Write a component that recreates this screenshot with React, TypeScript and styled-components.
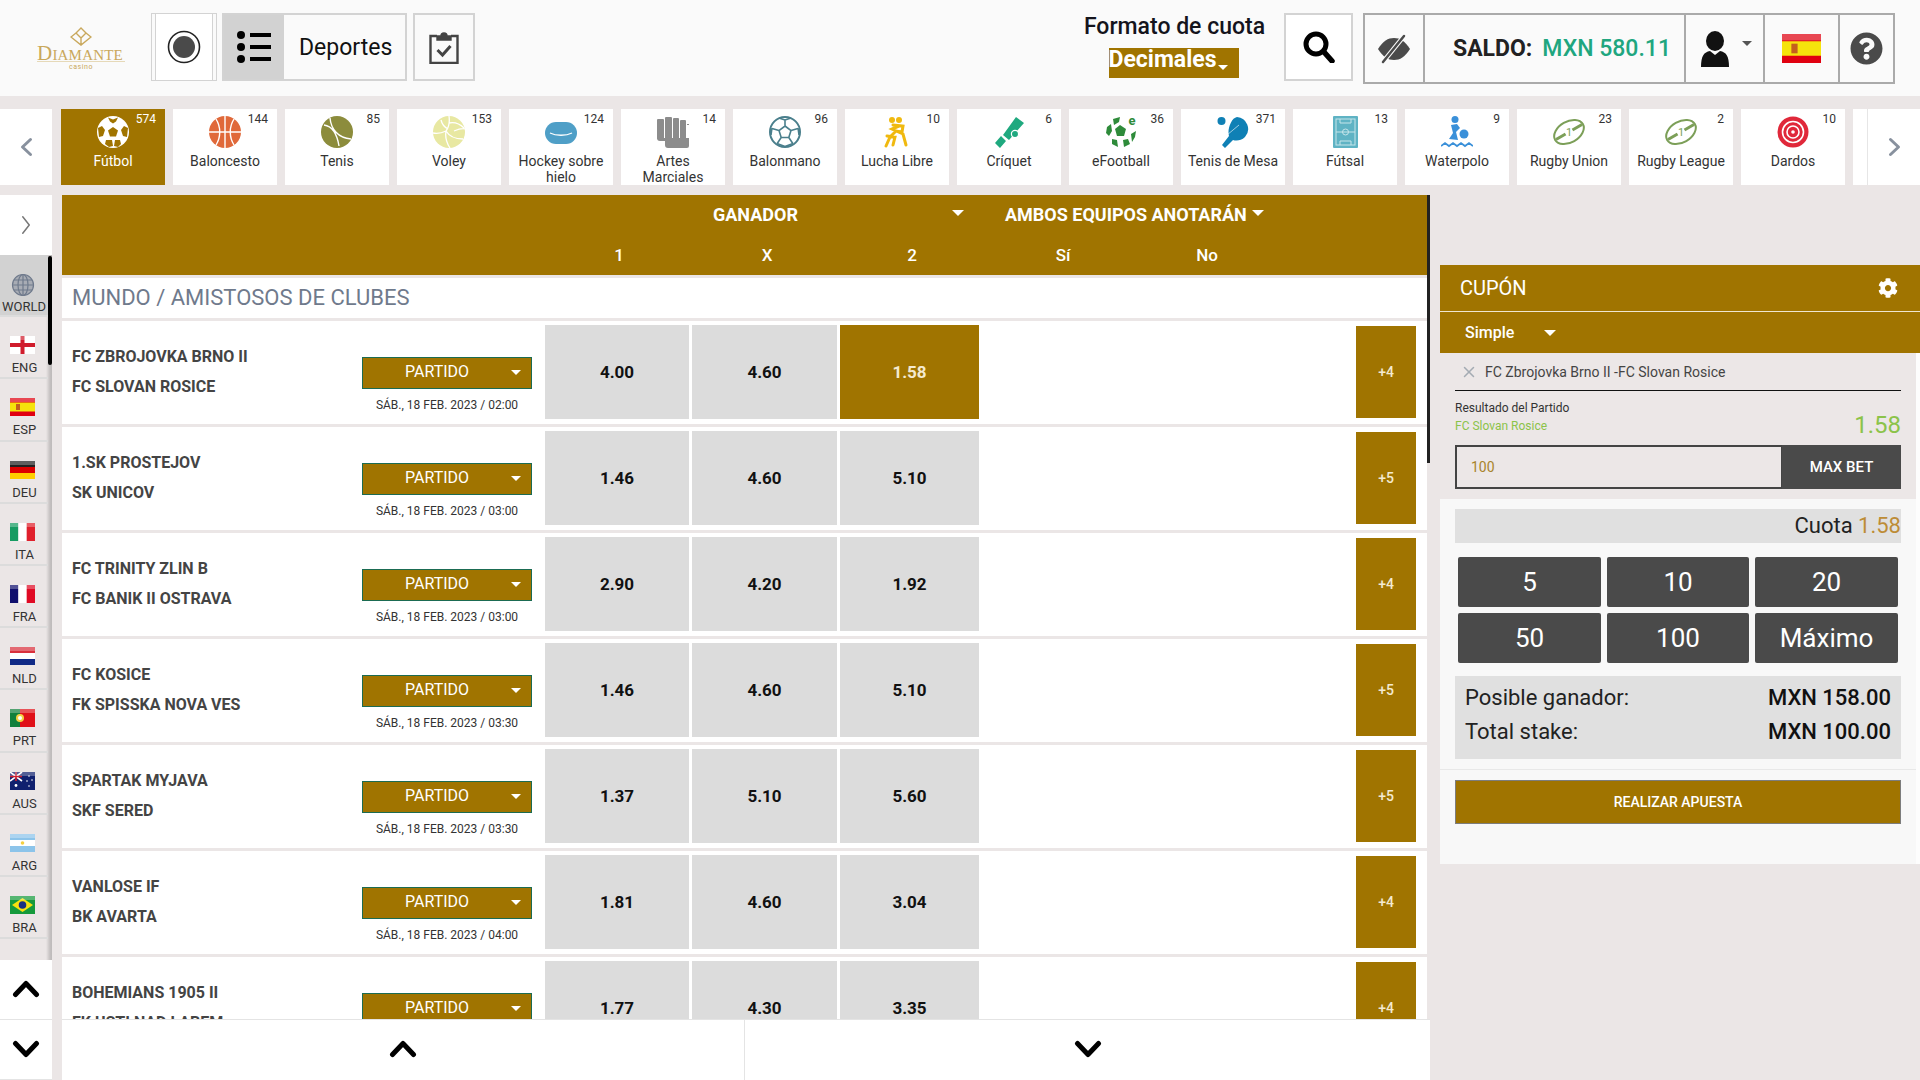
import React from "react";
import styled, { createGlobalStyle } from "styled-components";
import { FaCog, FaQuestionCircle } from "react-icons/fa";
import { X } from "lucide-react";

const GOLD = "#a07400";
const PAGE = "#ebe6e6";

const GlobalStyle = createGlobalStyle`
  html, body { margin: 0; padding: 0; background: ${PAGE}; }
  * { box-sizing: border-box; }
  body { font-family: Roboto, "Liberation Sans", sans-serif; color: #222; }
`;

const Page = styled.div`
  width: 1920px;
  height: 1080px;
  overflow: hidden;
  display: flex;
  flex-direction: column;
  background: ${PAGE};
`;

/* ---------- top bar ---------- */
const TopBar = styled.header`
  height: 96px;
  flex: none;
  background: #fafafa;
  display: flex;
  padding-top: 13px;
`;
const Logo = styled.div`
  width: 151px;
  padding: 14px 0 0 37px;
  display: flex;
  flex-direction: column;
  color: #c9a85c;
  font-family: "Liberation Serif", serif;
  line-height: 1;
`;
const LogoMark = styled.svg`
  margin-left: 33px;
  flex: none;
`;
const LogoWord = styled.span`
  font-size: 15px;
  line-height: 15px;
  letter-spacing: 0.2px;
  white-space: nowrap;
  border-bottom: 1px solid #e6d9b8;
  width: 88px;
  height: 16px;
  &::first-letter { font-size: 21px; }
`;
const LogoSub = styled.span`
  font-size: 7px;
  line-height: 8px;
  letter-spacing: 0.6px;
  text-align: center;
  width: 88px;
  margin-top: 1px;
  font-family: Roboto, sans-serif;
`;
const BarBox = styled.div<{ $w: number; $ml?: number }>`
  width: ${(p) => p.$w}px;
  height: 68px;
  margin-left: ${(p) => p.$ml ?? 0}px;
  border: 2px solid #d3d3d3;
  display: flex;
  align-items: center;
  justify-content: center;
  flex: none;
`;
const RecordBox = styled(BarBox)`
  background: #fff;
  border-width: 1px;
  box-shadow: inset 3px 0 0 #fafafa, inset 4px 0 0 #d3d3d3, inset -3px 0 0 #fafafa, inset -4px 0 0 #d3d3d3;
`;
const SportsBox = styled(BarBox)`
  justify-content: flex-start;
  font-size: 23px;
  color: #111;
`;
const ListIconCell = styled.div`
  width: 60px;
  height: 100%;
  background: #d2d2d2;
  display: flex;
  align-items: center;
  justify-content: center;
  margin-right: 15px;
`;
const OddsFormat = styled.div`
  width: 221px;
  margin-left: 588px;
  display: flex;
  flex-direction: column;
  align-items: center;
  flex: none;
  padding: 1px 0 0 2px;
`;
const FormatTitle = styled.div`
  font-size: 23px;
  font-weight: 500;
  color: #14141c;
  line-height: 26px;
`;
const FormatSelect = styled.div`
  margin-top: 8px;
  margin-left: -2px;
  width: 130px;
  height: 30px;
  background: ${GOLD};
  color: #fff;
  font-size: 23px;
  font-weight: 700;
  line-height: 24px;
  display: flex;
  align-items: flex-start;
  justify-content: flex-start;
`;
const SearchBox = styled(BarBox)`
  background: #fff;
`;
const AccountBar = styled.div`
  margin-left: 10px;
  width: 532px;
  height: 71px;
  border: 2px solid #aaa;
  display: flex;
  flex: none;
`;
const AccountCell = styled.div<{ $w: number; $divider?: boolean }>`
  width: ${(p) => p.$w}px;
  flex: none;
  display: flex;
  align-items: center;
  justify-content: center;
  position: relative;
  border-right: ${(p) => (p.$divider ? "2px solid #aaa" : "none")};
`;
const BalanceCell = styled(AccountCell)`
  justify-content: flex-start;
  padding-left: 28px;
  font-size: 23px;
  font-weight: 700;
  color: #222;
  white-space: nowrap;
`;
const BalanceValue = styled.span`
  color: #20a67f;
  margin-left: 10px;
  font-weight: 500;
`;
const Caret = styled.i<{ $size?: number; $color?: string }>`
  display: inline-block;
  flex: none;
  width: 0;
  height: 0;
  border-left: ${(p) => p.$size ?? 6}px solid transparent;
  border-right: ${(p) => p.$size ?? 6}px solid transparent;
  border-top: ${(p) => p.$size ?? 6}px solid ${(p) => p.$color ?? "#fff"};
`;
const FormatCaret = styled(Caret)`
  margin-top: 17px;
  margin-left: 1px;
`;
const UserCaret = styled(Caret)`
  position: absolute;
  top: 26px;
  right: 11px;
`;

/* ---------- sports strip ---------- */
const SportsStrip = styled.nav`
  height: 76px;
  margin-top: 13px;
  flex: none;
  display: flex;
  gap: 8px;
  overflow: hidden;
`;
const StripArrow = styled.div<{ $w: number; $mr?: number }>`
  width: ${(p) => p.$w}px;
  margin-right: ${(p) => p.$mr ?? 0}px;
  flex: none;
  background: #fff;
  display: flex;
  align-items: center;
  justify-content: center;
`;
const SportTile = styled.div<{ $active?: boolean }>`
  width: 104px;
  flex: none;
  position: relative;
  background: ${(p) => (p.$active ? GOLD : "#fff")};
  color: ${(p) => (p.$active ? "#fff" : "#333")};
  display: flex;
  flex-direction: column;
  align-items: center;
  padding-top: 7px;
`;
const SportCount = styled.span`
  position: absolute;
  top: 2px;
  right: 9px;
  font-size: 12px;
  line-height: 16px;
`;
const SportLabel = styled.span`
  font-size: 14px;
  line-height: 16px;
  margin-top: 5px;
  text-align: center;
  width: 100%;
  padding: 0 5px;
`;
const StripEnd = styled.div`
  display: flex;
  flex: none;
  width: 67px;
`;
const StripStub = styled.div`
  width: 15px;
  background: #fff;
  border-right: 1px solid #e6e6e6;
`;

/* ---------- body ---------- */
const Body = styled.div`
  flex: 1;
  min-height: 0;
  display: flex;
  margin-top: 10px;
`;
const Sidebar = styled.aside`
  width: 52px;
  flex: none;
  display: flex;
  flex-direction: column;
`;
const SideExpand = styled.div`
  height: 60px;
  flex: none;
  background: #fff;
  display: flex;
  align-items: center;
  justify-content: center;
`;
const CountryList = styled.div`
  flex: 1;
  min-height: 0;
  overflow: hidden;
  position: relative;
  padding-right: 4px;
  background: linear-gradient(to right, ${PAGE} 46px, #c4c0c0 50px, #bdbaba 52px);
`;
const SideThumb = styled.div`
  position: absolute;
  top: 1px;
  right: 0;
  width: 4px;
  height: 109px;
  background: #000;
  border-radius: 2px;
`;
const CountryItem = styled.div<{ $active?: boolean }>`
  height: 62.2px;
  display: flex;
  flex-direction: column;
  align-items: center;
  padding-top: ${(p) => (p.$active ? 18 : 19)}px;
  border-bottom: 2px solid #dcdcdc;
  background: ${(p) => (p.$active ? "linear-gradient(#d2d2d2 0 60px, #ebe6e6 60px)" : "transparent")};
  font-size: 13px;
  color: #333;
  line-height: 16px;
  overflow: hidden;
  svg { margin-left: -3px; }
`;
const CountryName = styled.span<{ $active?: boolean }>`
  margin-top: ${(p) => (p.$active ? 2 : 6)}px;
  padding-left: ${(p) => (p.$active ? 0 : 1)}px;
`;
const SideNav = styled.div`
  height: 60px;
  flex: none;
  background: #fff;
  display: flex;
  align-items: center;
  justify-content: center;
  border-bottom: 1px solid #e4e4e4;
  padding-bottom: 2px;
`;

const Main = styled.main`
  width: 1368px;
  margin-left: 10px;
  flex: none;
  display: flex;
  flex-direction: column;
  position: relative;
  background: ${PAGE};
  padding-right: 3px;
`;
const MainThumb = styled.div`
  position: absolute;
  top: 0;
  right: 0;
  width: 3px;
  height: 268px;
  background: #222;
`;
const TableHead = styled.div`
  height: 80px;
  flex: none;
  background: ${GOLD};
  color: #fff;
  display: flex;
  flex-direction: column;
`;
const HeadGroups = styled.div`
  display: flex;
  align-items: center;
  padding: 8px 0 0 651px;
  height: 30px;
  font-size: 18px;
  font-weight: 700;
  white-space: nowrap;
`;
const GanadorCaret = styled(Caret)`
  margin: -3px 0 0 154px;
`;
const AmbosLabel = styled.span`
  margin-left: 41px;
  width: 247px;
`;
const AmbosCaret = styled(Caret)`
  margin: -3px 0 0 0;
`;
const HeadColumns = styled.div`
  display: grid;
  grid-template-columns: 148px 148px 142px 160px 128px;
  padding: 15px 0 0 483px;
  font-size: 17px;
  font-weight: 500;
  line-height: 30px;
  text-align: center;
`;
const LeagueTitle = styled.h2`
  margin: 3px 0;
  height: 40px;
  flex: none;
  background: #fff;
  padding-left: 10px;
  font-size: 22px;
  line-height: 40px;
  font-weight: 400;
  color: #6f7a8c;
`;
const MatchList = styled.div`
  flex: 1;
  min-height: 0;
  overflow: hidden;
  display: flex;
  flex-direction: column;
  gap: 3px;
`;
const MatchRow = styled.div`
  height: 103px;
  flex: none;
  background: #fff;
  display: flex;
`;
const Teams = styled.div`
  width: 300px;
  flex: none;
  padding: 21px 0 0 10px;
  font-size: 16px;
  font-weight: 700;
  color: #444;
  line-height: 30px;
`;
const Market = styled.div`
  width: 170px;
  flex: none;
  padding-top: 36px;
  display: flex;
  flex-direction: column;
  align-items: center;
`;
const MarketSelect = styled.div`
  width: 170px;
  height: 32px;
  background: ${GOLD};
  border: 1px solid #1b6b52;
  color: #fff;
  font-size: 16px;
  line-height: 28px;
  display: flex;
  align-items: flex-start;
  padding: 0 10px 0 42px;
  justify-content: space-between;
`;
const MarketCaret = styled(Caret)`
  margin-top: 12px;
`;
const MatchDate = styled.div`
  margin-top: 8px;
  font-size: 12px;
  line-height: 16px;
  color: #333;
  white-space: nowrap;
`;
const OddsGrid = styled.div`
  margin: 4px 0 0 13px;
  display: grid;
  grid-template-columns: 144px 145px 139px;
  column-gap: 3px;
  height: 94px;
  flex: none;
`;
const OddCell = styled.div<{ $selected?: boolean }>`
  background: ${(p) => (p.$selected ? GOLD : "#dcdcdc")};
  color: ${(p) => (p.$selected ? "#f4ead0" : "#111")};
  font-size: 17px;
  font-weight: 700;
  display: flex;
  align-items: center;
  justify-content: center;
`;
const MoreBets = styled.div`
  margin: 5px 0 0 377px;
  width: 60px;
  height: 92px;
  flex: none;
  background: ${GOLD};
  color: #f4ead0;
  font-size: 14px;
  font-weight: 500;
  display: flex;
  align-items: center;
  justify-content: center;
`;
const PageNav = styled.div`
  height: 61px;
  flex: none;
  margin-right: -3px;
  background: #fff;
  border-top: 1px solid #e4e4e4;
  display: grid;
  grid-template-columns: 683px 1fr;
`;
const PageNavCell = styled.div<{ $divider?: boolean }>`
  display: flex;
  align-items: center;
  justify-content: center;
  padding-bottom: 2px;
  border-right: ${(p) => (p.$divider ? "1px solid #e4e4e4" : "none")};
`;

/* ---------- bet slip ---------- */
const Slip = styled.aside`
  width: 480px;
  margin: 70px 0 0 10px;
  flex: none;
  height: 599px;
  display: flex;
  flex-direction: column;
`;
const SlipHead = styled.div`
  height: 47px;
  background: ${GOLD};
  color: #fff;
  font-size: 20px;
  display: flex;
  align-items: center;
  justify-content: space-between;
  padding: 0 22px 0 20px;
  border-bottom: 1px solid #efe6d0;
`;
const SlipType = styled.div`
  height: 41px;
  background: ${GOLD};
  color: #fff;
  font-size: 16px;
  font-weight: 500;
  display: flex;
  align-items: center;
  padding-left: 25px;
  gap: 30px;
`;
const SlipBody = styled.div`
  flex: 1;
  background: #f8f8f8;
  border-right: 4px solid #fdfdfd;
  display: flex;
  flex-direction: column;
`;
const Selection = styled.div`
  height: 146px;
  flex: none;
  background: #ece7e7;
  padding: 0 15px;
`;
const SelectionTitle = styled.div`
  height: 38px;
  border-bottom: 1px solid #111;
  display: flex;
  align-items: center;
  padding-left: 5px;
  gap: 7px;
  font-size: 14px;
  color: #444;
`;
const PickRow = styled.div`
  display: flex;
  justify-content: space-between;
  align-items: flex-end;
  height: 52px;
`;
const PickMarket = styled.div`
  font-size: 12px;
  line-height: 18px;
  color: #333;
  padding-bottom: 8px;
`;
const PickTeam = styled.div`
  color: #8bc34a;
`;
const PickOdd = styled.div`
  font-size: 24px;
  line-height: 28px;
  color: #8bc34a;
  padding-bottom: 4px;
  height: 32px;
`;
const StakeRow = styled.div`
  display: flex;
  height: 44px;
  margin-top: 2px;
`;
const StakeInput = styled.div`
  flex: 1;
  border: 2px solid #444;
  border-right-width: 1px;
  color: #a8842b;
  font-size: 14px;
  display: flex;
  align-items: center;
  padding-left: 14px;
`;
const MaxBet = styled.div`
  width: 119px;
  background: #4a4a4a;
  color: #fff;
  font-size: 15px;
  font-weight: 500;
  display: flex;
  align-items: center;
  justify-content: center;
`;
const Totals = styled.div`
  padding: 10px 15px 0;
  flex: none;
`;
const QuotaBar = styled.div`
  height: 34px;
  background: #e0e0e0;
  text-align: right;
  font-size: 22px;
  line-height: 34px;
  color: #222;
`;
const QuotaValue = styled.span`
  color: #bd8c36;
`;
const QuickGrid = styled.div`
  display: grid;
  grid-template-columns: 143px 142px 143px;
  gap: 6px;
  margin: 14px 3px 0;
`;
const QuickButton = styled.div`
  height: 50px;
  background: #4a4a4a;
  color: #fff;
  border-radius: 2px;
  font-size: 26px;
  display: flex;
  align-items: center;
  justify-content: center;
`;
const Summary = styled.div`
  margin-top: 13px;
  height: 83px;
  background: #e0e0e0;
  padding: 5px 10px 0;
  font-size: 22px;
  line-height: 34px;
`;
const SummaryRow = styled.div`
  display: flex;
  justify-content: space-between;
`;
const SummaryValue = styled.b`
  font-weight: 500;
  color: #111;
`;
const SlipDivider = styled.div`
  height: 1px;
  background: #e8e8e8;
  margin-top: 10px;
  flex: none;
`;
const PlaceBet = styled.div`
  margin: 10px 15px 0;
  height: 44px;
  flex: none;
  background: ${GOLD};
  border: 1px solid #7d7d7d;
  color: #fff;
  font-size: 14px;
  font-weight: 500;
  display: flex;
  align-items: center;
  justify-content: center;
`;

/* ---------- drawings ---------- */
const Chevron = ({ dir, color = "#000", w = 28, h = 18, sw = 5 }: { dir: "up" | "down" | "left" | "right"; color?: string; w?: number; h?: number; sw?: number }) => {
  const p = sw / 2 + 1;
  const pts: Record<string, string> = {
    up: `${p},${h - p} ${w / 2},${p} ${w - p},${h - p}`,
    down: `${p},${p} ${w / 2},${h - p} ${w - p},${p}`,
    left: `${w - p},${p} ${p},${h / 2} ${w - p},${h - p}`,
    right: `${p},${p} ${w - p},${h / 2} ${p},${h - p}`,
  };
  return (
    <svg width={w} height={h} viewBox={`0 0 ${w} ${h}`}>
      <polyline points={pts[dir]} fill="none" stroke={color} strokeWidth={sw} strokeLinecap="round" strokeLinejoin="round" />
    </svg>
  );
};

const Ball = ({ fill, children }: { fill: string; children?: React.ReactNode }) => (
  <svg width="32" height="32" viewBox="0 0 32 32">
    <circle cx="16" cy="16" r="16" fill={fill} />
    {children}
  </svg>
);

const rugby = (
  <svg width="32" height="32" viewBox="0 0 32 32">
    <g transform="rotate(-30 16 16)" fill="none" stroke="#7c9f58" strokeWidth="2">
      <ellipse cx="16" cy="16" rx="16" ry="10.5" />
      <path d="M1 16h11M20 16h11" strokeWidth="3" />
    </g>
    <text x="16" y="20" fontSize="11" fontFamily="Roboto" fill="#7c9f58" textAnchor="middle">1</text>
  </svg>
);

const sportIcons: Record<string, React.ReactNode> = {
  football: (
    <Ball fill="#fff">
      <g fill={GOLD}>
        <path d="M16 11l5 3.5-2 6h-6l-2-6z" />
        <path d="M11 1.5l5 2 5-2-2 4-3 2-3-2z" />
        <path d="M1 12l4-2 3 4-2 6-4 1zM31 12l-4-2-3 4 2 6 4 1z" />
        <path d="M9 24h6l1 6-4 1-4-3zM23 24h-5l-1 6 4 1 3-3z" />
      </g>
    </Ball>
  ),
  basket: (
    <Ball fill="#e0693a">
      <path d="M16 0v32M0 16h32M7 3c5 8 5 18 0 26M25 3c-5 8-5 18 0 26" stroke="#fff" strokeWidth="1.4" fill="none" />
    </Ball>
  ),
  tennis: (
    <Ball fill="#8c8c3c">
      <path d="M9 2c1 11 8 20 21 21M3 9c8 1 13 9 15 21" stroke="#fff" strokeWidth="1.4" fill="none" />
    </Ball>
  ),
  volley: (
    <Ball fill="#e8e8a2">
      <path d="M16 0c1 7 0 11-3 15-4 2-8 3-13 2M13 15c3 5 8 8 17 8M16 7c5-1 11 1 15 5M13 15c-1 6 0 11 4 17M8 4c1 4 3 7 7 9M21 15c5-2 8-3 11-2" stroke="#fff" strokeWidth="1.3" fill="none" />
    </Ball>
  ),
  hockey: (
    <svg width="32" height="32" viewBox="0 0 32 32">
      <rect y="6" width="32" height="22" rx="11" fill="#4f9fc7" />
      <path d="M5 17c6 3 16 3 22 0" stroke="#fff" strokeWidth="1.3" fill="none" />
    </svg>
  ),
  martial: (
    <svg width="32" height="32" viewBox="0 0 32 32" fill="#8c8c8c">
      <rect x="0" y="3" width="7" height="20" rx="1" />
      <rect x="8" y="1" width="7" height="22" rx="1" />
      <rect x="16" y="2" width="6" height="21" rx="1" />
      <rect x="23" y="4" width="6" height="19" rx="1" />
      <path d="M0 22h32V9h-2v-1h2v22a2 2 0 0 1-2 2H11a3 3 0 0 1-3-3v-4H3a3 3 0 0 1-3-3z" />
    </svg>
  ),
  handball: (
    <svg width="32" height="32" viewBox="0 0 32 32" fill="none" stroke="#4a7f8c" strokeWidth="1.6">
      <circle cx="16" cy="16" r="15" strokeWidth="2" />
      <path d="M16 10l6 4.5-2.2 7h-7.6l-2.2-7zM16 10V4M22 14.5l7-2M19.8 21.5l4 6M12.2 21.5l-4 6M10 14.5l-7-2M16 4l-6-2M16 4l6-2M29 12l1 7M3 12l-1 7M8 27.5l8 3M24 27.5l-8 3" />
    </svg>
  ),
  wrestling: (
    <svg width="32" height="32" viewBox="0 0 32 32" fill="none" stroke="#f0b90f" strokeWidth="3" strokeLinecap="round">
      <circle cx="11" cy="4" r="3" fill="#f0b90f" stroke="none" />
      <circle cx="18" cy="4" r="3" fill="#f0b90f" stroke="none" />
      <path d="M12 9l10 1-1 6-6-1-6 6-4 9M18 10l-7 3 11 5 3 11M6 20l8 1-2 8" />
    </svg>
  ),
  cricket: (
    <svg width="32" height="32" viewBox="0 0 32 32" fill="#1fa97f">
      <path d="M23 1l8 6-15 17-6-5zM8 20l5 5-6 7-5-5z" />
      <circle cx="22" cy="18" r="3.6" stroke="#fff" strokeWidth="1.2" />
    </svg>
  ),
  efootball: (
    <svg width="32" height="32" viewBox="0 0 32 32" fill="#2e8b3a">
      <path d="M15 9l6 4-2 7h-7l-2-7z" />
      <path d="M8 3l7-2-1 5-5 3zM2 11l4-3 1 7-3 5-3-3zM7 23l5 1 1 7-6-3zM18 24l5-1 2 5-6 3zM26 18l5-3-1 6-3 5z" />
      <text x="27" y="9" fontSize="13" fontWeight="700" fontFamily="Roboto" textAnchor="middle">e</text>
    </svg>
  ),
  tabletennis: (
    <svg width="32" height="32" viewBox="0 0 32 32" fill="#0f80b5">
      <circle cx="4.500" cy="5" r="4" />
      <path d="M20 1a12 12 0 0 1 8 20c-4 4-9 4-12 3l-8 8-3-3 7-9c-2-6 2-18 8-19z" />
      <path d="M10 19l12-10" stroke="#fff" strokeWidth="0.6" />
    </svg>
  ),
  futsal: (
    <svg width="32" height="32" viewBox="0 0 32 32">
      <rect x="4" y="0" width="25" height="32" rx="1" fill="#5fb3c4" />
      <g fill="none" stroke="#c6e5ea" strokeWidth="1">
        <rect x="7" y="3" width="19" height="26" />
        <path d="M7 16h19M11 3v4h11V3M11 29v-4h11v4" />
        <circle cx="16.500" cy="16" r="3" />
      </g>
    </svg>
  ),
  waterpolo: (
    <svg width="32" height="32" viewBox="0 0 32 32" fill="#3a90d9">
      <circle cx="14" cy="3.500" r="3.500" />
      <circle cx="23" cy="18" r="4.500" />
      <path d="M10 9l6-1 3 4-4 4 2 8-9-1 4-6z" />
      <path d="M0 30l4-3 4 3 4-3 4 3 4-3 4 3 4-3 4 3" fill="none" stroke="#3a90d9" strokeWidth="1.8" />
    </svg>
  ),
  rugby,
  darts: (
    <svg width="32" height="32" viewBox="0 0 32 32" fill="none">
      <circle cx="16" cy="16" r="15.500" fill="#e0283a" />
      <circle cx="16" cy="16" r="10.500" stroke="#fff" strokeWidth="1.6" />
      <circle cx="16" cy="16" r="6" stroke="#fff" strokeWidth="1.6" />
      <circle cx="16" cy="16" r="1.800" fill="#fff" />
    </svg>
  ),
};

const flagParts: Record<string, React.ReactNode> = {
  ENG: (<><rect width="25" height="18" fill="#fff" /><path d="M10.500 0h4v18h-4zM0 7h25v4H0z" fill="#d01c2c" /></>),
  ESP: (<><rect width="25" height="18" fill="#f5e30c" /><path d="M0 0h25v4.500H0zM0 13.500h25V18H0z" fill="#e00010" /><rect x="6" y="6" width="4" height="6" fill="#c4601d" /></>),
  DEU: (<><rect width="25" height="6" fill="#222" /><rect y="6" width="25" height="6" fill="#dd0000" /><rect y="12" width="25" height="6" fill="#ffce00" /></>),
  ITA: (<><rect width="8.400" height="18" fill="#169b62" /><rect x="8.400" width="8.300" height="18" fill="#fff" /><rect x="16.700" width="8.300" height="18" fill="#e0202c" /></>),
  FRA: (<><rect width="8.400" height="18" fill="#10106e" /><rect x="8.400" width="8.300" height="18" fill="#fff" /><rect x="16.700" width="8.300" height="18" fill="#e00a24" /></>),
  NLD: (<><rect width="25" height="6" fill="#d9303c" /><rect y="6" width="25" height="6" fill="#fff" /><rect y="12" width="25" height="6" fill="#102a86" /></>),
  PRT: (<><rect width="10" height="18" fill="#12803c" /><rect x="10" width="15" height="18" fill="#e01018" /><circle cx="10" cy="9" r="4" fill="#f5d040" /><circle cx="10" cy="9" r="2" fill="#fff" /></>),
  AUS: (<><rect width="25" height="18" fill="#10206e" /><path d="M0 0l12 9M12 0L0 9" stroke="#fff" strokeWidth="1.6" /><path d="M6 0v9M0 4.500h12" stroke="#d01c2c" strokeWidth="1.6" /><circle cx="6" cy="13.500" r="1.400" fill="#fff" /><circle cx="19" cy="4" r=".8" fill="#fff" /><circle cx="22" cy="8" r=".8" fill="#fff" /><circle cx="17" cy="9" r=".8" fill="#fff" /><circle cx="19" cy="14" r=".8" fill="#fff" /></>),
  ARG: (<><rect width="25" height="18" fill="#8cc4ea" /><rect y="6" width="25" height="6" fill="#fff" /><circle cx="12.500" cy="9" r="1.800" fill="#f5d040" /></>),
  BRA: (<><rect width="25" height="18" fill="#159a3c" /><path d="M12.500 2L23 9l-10.500 7L2 9z" fill="#f8e010" /><circle cx="12.500" cy="9" r="3.800" fill="#1a2f80" /></>),
};

const Flag = ({ code, width = 25, height = 18 }: { code: string; width?: number; height?: number }) => (
  <svg width={width} height={height} viewBox="0 0 25 18" preserveAspectRatio="none" style={{ flex: "none" }}>
    {flagParts[code]}
    <rect width="25" height="4" fill="#fff" opacity="0.28" />
  </svg>
);

/* ---------- data ---------- */
const sports = [
  { name: "Fútbol", count: 574, icon: "football", active: true },
  { name: "Baloncesto", count: 144, icon: "basket" },
  { name: "Tenis", count: 85, icon: "tennis" },
  { name: "Voley", count: 153, icon: "volley" },
  { name: "Hockey sobre hielo", count: 124, icon: "hockey" },
  { name: "Artes Marciales", count: 14, icon: "martial" },
  { name: "Balonmano", count: 96, icon: "handball" },
  { name: "Lucha Libre", count: 10, icon: "wrestling" },
  { name: "Críquet", count: 6, icon: "cricket" },
  { name: "eFootball", count: 36, icon: "efootball" },
  { name: "Tenis de Mesa", count: 371, icon: "tabletennis" },
  { name: "Fútsal", count: 13, icon: "futsal" },
  { name: "Waterpolo", count: 9, icon: "waterpolo" },
  { name: "Rugby Union", count: 23, icon: "rugby" },
  { name: "Rugby League", count: 2, icon: "rugby" },
  { name: "Dardos", count: 10, icon: "darts" },
];

const countries = ["ENG", "ESP", "DEU", "ITA", "FRA", "NLD", "PRT", "AUS", "ARG", "BRA"];

const matches = [
  { home: "FC ZBROJOVKA BRNO II", away: "FC SLOVAN ROSICE", time: "02:00", odds: ["4.00", "4.60", "1.58"], more: 4, picked: 2 },
  { home: "1.SK PROSTEJOV", away: "SK UNICOV", time: "03:00", odds: ["1.46", "4.60", "5.10"], more: 5 },
  { home: "FC TRINITY ZLIN B", away: "FC BANIK II OSTRAVA", time: "03:00", odds: ["2.90", "4.20", "1.92"], more: 4 },
  { home: "FC KOSICE", away: "FK SPISSKA NOVA VES", time: "03:30", odds: ["1.46", "4.60", "5.10"], more: 5 },
  { home: "SPARTAK MYJAVA", away: "SKF SERED", time: "03:30", odds: ["1.37", "5.10", "5.60"], more: 5 },
  { home: "VANLOSE IF", away: "BK AVARTA", time: "04:00", odds: ["1.81", "4.60", "3.04"], more: 4 },
  { home: "BOHEMIANS 1905 II", away: "FK USTI NAD LABEM", time: "04:00", odds: ["1.77", "4.30", "3.35"], more: 4 },
];

const quickStakes = ["5", "10", "20", "50", "100", "Máximo"];

export default function App() {
  return (
    <Page>
      <GlobalStyle />
      <TopBar>
        <Logo>
          <LogoMark width="22" height="19" viewBox="0 0 22 19" fill="none" stroke="#c9a85c" strokeWidth="1.4">
            <path d="M11 1l5 5-5 5-5-5zM6 6l-5 4 10 8 10-8-5-4M11 11v7" />
          </LogoMark>
          <LogoWord>DIAMANTE</LogoWord>
          <LogoSub>casino</LogoSub>
        </Logo>
        <RecordBox $w={66}>
          <svg width="34" height="34" viewBox="0 0 34 34">
            <circle cx="17" cy="17" r="15.500" fill="#fff" stroke="#222" strokeWidth="1.6" />
            <circle cx="17" cy="17" r="11" fill="#4a4a4a" />
          </svg>
        </RecordBox>
        <SportsBox $w={185} $ml={5}>
          <ListIconCell>
            <svg width="34" height="32" viewBox="0 0 34 32" fill="#000">
              <circle cx="4" cy="4" r="4" />
              <circle cx="4" cy="16" r="4" />
              <circle cx="4" cy="28" r="4" />
              <rect x="13" y="2" width="21" height="4" />
              <rect x="13" y="14" width="21" height="4" />
              <rect x="13" y="26" width="21" height="4" />
            </svg>
          </ListIconCell>
          Deportes
        </SportsBox>
        <BarBox $w={62} $ml={6}>
          <svg width="30" height="33" viewBox="0 0 30 33" fill="none" stroke="#444" strokeWidth="2.400">
            <path d="M8 5H1.500v27h27V5H22" />
            <path d="M8 9V5h4a3 3 0 0 1 6 0h4v4z" fill="#444" strokeWidth="1.400" />
            <path d="M8.500 19l5 5 8-9" strokeWidth="3" />
          </svg>
        </BarBox>
        <OddsFormat>
          <FormatTitle>Formato de cuota</FormatTitle>
          <FormatSelect>
            Decimales
            <FormatCaret $size={5} />
          </FormatSelect>
        </OddsFormat>
        <SearchBox $w={69}>
          <svg width="32" height="32" viewBox="0 0 32 32" fill="none" stroke="#000">
            <circle cx="13" cy="13" r="10" strokeWidth="5" />
            <path d="M21 21l8 9" strokeWidth="5.500" strokeLinecap="round" />
          </svg>
        </SearchBox>
        <AccountBar>
          <AccountCell $w={60} $divider>
            <svg width="34" height="30" viewBox="0 0 34 30">
              <path d="M1 15C6 7 11 4 17 4s11 3 16 11c-5 8-10 11-16 11S6 23 1 15z" fill="#4a4a4a" />
              <path d="M6 28L27 2" stroke="#fafafa" strokeWidth="4.500" />
              <path d="M6 28L27 2" stroke="#4a4a4a" strokeWidth="2.500" strokeLinecap="round" />
            </svg>
          </AccountCell>
          <BalanceCell $w={261} $divider>
            SALDO:<BalanceValue>MXN 580.11</BalanceValue>
          </BalanceCell>
          <AccountCell $w={79} $divider>
            <svg width="28" height="36" viewBox="0 0 28 36" style={{ marginRight: 20 }}>
              <ellipse cx="14" cy="10" rx="9" ry="10" fill="#111" />
              <path d="M9 20l5 4 5-4c6 1 9 5 9 16H0c0-11 3-15 9-16z" fill="#111" />
            </svg>
            <UserCaret $size={5} $color="#555" />
          </AccountCell>
          <AccountCell $w={75} $divider>
            <Flag code="ESP" width={39} height={29} />
          </AccountCell>
          <AccountCell $w={53}>
            <FaQuestionCircle size={33} color="#4a4a4a" />
          </AccountCell>
        </AccountBar>
      </TopBar>

      <SportsStrip>
        <StripArrow $w={52} $mr={1}>
          <Chevron dir="left" color="#88919e" w={13} h={20} sw={3} />
        </StripArrow>
        {sports.map((s) => (
          <SportTile key={s.name} $active={s.active}>
            <SportCount>{s.count}</SportCount>
            {sportIcons[s.icon]}
            <SportLabel>{s.name}</SportLabel>
          </SportTile>
        ))}
        <StripEnd>
          <StripStub />
          <StripArrow $w={52}>
            <Chevron dir="right" color="#88919e" w={13} h={20} sw={3} />
          </StripArrow>
        </StripEnd>
      </SportsStrip>

      <Body>
        <Sidebar>
          <SideExpand>
            <Chevron dir="right" color="#777" w={10} h={20} sw={1.500} />
          </SideExpand>
          <CountryList>
            <SideThumb />
            <CountryItem $active>
              <svg width="24" height="24" viewBox="0 0 24 24" fill="#a8acb4" stroke="#6f7a8c" strokeWidth="1.200">
                <circle cx="12" cy="12" r="10.500" />
                <ellipse cx="12" cy="12" rx="5" ry="10.500" fill="none" />
                <path d="M12 1.500v21M1.500 12h21M3 7h18M3 17h18" fill="none" />
              </svg>
              <CountryName $active>WORLD</CountryName>
            </CountryItem>
            {countries.map((c) => (
              <CountryItem key={c}>
                <Flag code={c} />
                <CountryName>{c}</CountryName>
              </CountryItem>
            ))}
          </CountryList>
          <SideNav>
            <Chevron dir="up" />
          </SideNav>
          <SideNav>
            <Chevron dir="down" />
          </SideNav>
        </Sidebar>

        <Main>
          <MainThumb />
          <TableHead>
            <HeadGroups>
              GANADOR
              <GanadorCaret $size={6} />
              <AmbosLabel>AMBOS EQUIPOS ANOTARÁN</AmbosLabel>
              <AmbosCaret $size={6} />
            </HeadGroups>
            <HeadColumns>
              <span>1</span>
              <span>X</span>
              <span>2</span>
              <span>Sí</span>
              <span>No</span>
            </HeadColumns>
          </TableHead>
          <LeagueTitle>MUNDO / AMISTOSOS DE CLUBES</LeagueTitle>
          <MatchList>
            {matches.map((m) => (
              <MatchRow key={m.home}>
                <Teams>
                  <div>{m.home}</div>
                  <div>{m.away}</div>
                </Teams>
                <Market>
                  <MarketSelect>
                    PARTIDO
                    <MarketCaret $size={5} />
                  </MarketSelect>
                  <MatchDate>SÁB., 18 FEB. 2023 / {m.time}</MatchDate>
                </Market>
                <OddsGrid>
                  {m.odds.map((o, i) => (
                    <OddCell key={i} $selected={m.picked === i}>
                      {o}
                    </OddCell>
                  ))}
                </OddsGrid>
                <MoreBets>+{m.more}</MoreBets>
              </MatchRow>
            ))}
          </MatchList>
          <PageNav>
            <PageNavCell $divider>
              <Chevron dir="up" />
            </PageNavCell>
            <PageNavCell>
              <Chevron dir="down" />
            </PageNavCell>
          </PageNav>
        </Main>

        <Slip>
          <SlipHead>
            CUPÓN
            <FaCog size={20} />
          </SlipHead>
          <SlipType>
            Simple
            <Caret $size={6} />
          </SlipType>
          <SlipBody>
            <Selection>
              <SelectionTitle>
                <X size={18} color="#a4abb3" />
                FC Zbrojovka Brno II -FC Slovan Rosice
              </SelectionTitle>
              <PickRow>
                <PickMarket>
                  Resultado del Partido
                  <PickTeam>FC Slovan Rosice</PickTeam>
                </PickMarket>
                <PickOdd>1.58</PickOdd>
              </PickRow>
              <StakeRow>
                <StakeInput>100</StakeInput>
                <MaxBet>MAX BET</MaxBet>
              </StakeRow>
            </Selection>
            <Totals>
              <QuotaBar>
                Cuota <QuotaValue>1.58</QuotaValue>
              </QuotaBar>
              <QuickGrid>
                {quickStakes.map((q) => (
                  <QuickButton key={q}>{q}</QuickButton>
                ))}
              </QuickGrid>
              <Summary>
                <SummaryRow>
                  Posible ganador:<SummaryValue>MXN 158.00</SummaryValue>
                </SummaryRow>
                <SummaryRow>
                  Total stake:<SummaryValue>MXN 100.00</SummaryValue>
                </SummaryRow>
              </Summary>
            </Totals>
            <SlipDivider />
            <PlaceBet>REALIZAR APUESTA</PlaceBet>
          </SlipBody>
        </Slip>
      </Body>
    </Page>
  );
}
